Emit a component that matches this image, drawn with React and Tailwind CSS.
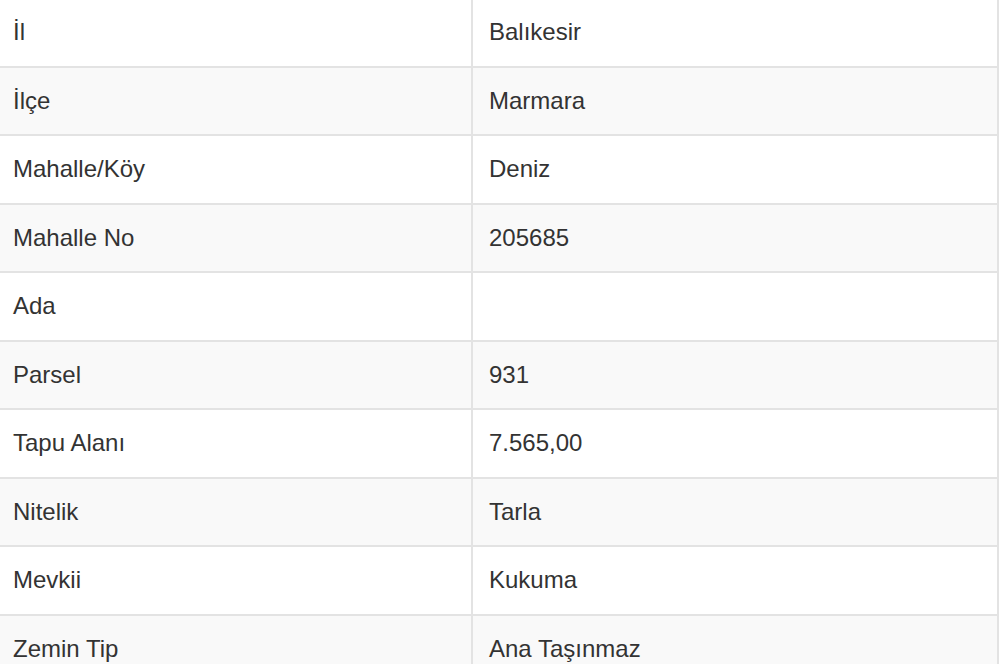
const rows = [
  ['İl', 'Balıkesir'],
  ['İlçe', 'Marmara'],
  ['Mahalle/Köy', 'Deniz'],
  ['Mahalle No', '205685'],
  ['Ada', ''],
  ['Parsel', '931'],
  ['Tapu Alanı', '7.565,00'],
  ['Nitelik', 'Tarla'],
  ['Mevkii', 'Kukuma'],
  ['Zemin Tip', 'Ana Taşınmaz'],
];

export default function App() {
  return (
    <div className="w-[1000px] h-[664px] overflow-hidden bg-white" style={{ fontFamily: '"Liberation Sans", Arial, sans-serif' }}>
      <div className="-mt-[1px] border-r-2 border-[#e3e3e3] w-[999px]">
        {rows.map(([k, v], i) => (
          <div
            key={k}
            className={`flex h-[68.5px] border-b-2 border-[#e3e3e3] text-[24px] text-[#333] ${i % 2 === 1 ? 'bg-[#f9f9f9]' : 'bg-white'}`}
          >
            <div className="w-[473px] flex items-center pl-[13px] border-r-2 border-[#e3e3e3]">{k}</div>
            <div className="flex-1 flex items-center pl-[16px]">{v}</div>
          </div>
        ))}
      </div>
    </div>
  );
}
